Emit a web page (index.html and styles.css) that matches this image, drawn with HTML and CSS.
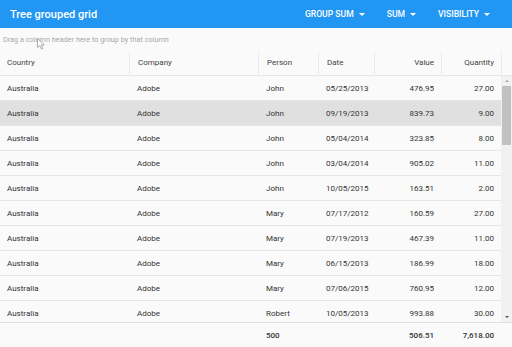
FILE: index.html
```html
<!DOCTYPE html>
<html>
<head>
<meta charset="utf-8">
<link rel="stylesheet" href="styles.css">
</head>
<body>
<div class="app">
  <header class="appbar">
    <div class="title">Tree grouped grid</div>
    <nav class="menus">
      <span class="menu">GROUP SUM <i class="caret"></i></span>
      <span class="menu">SUM <i class="caret"></i></span>
      <span class="menu">VISIBILITY <i class="caret"></i></span>
    </nav>
  </header>
  <div class="grid">
    <div class="group-panel">Drag a column header here to group by that column</div>
    <div class="row head">
      <div class="cell">Country</div>
      <div class="cell">Company</div>
      <div class="cell">Person</div>
      <div class="cell">Date</div>
      <div class="cell num">Value</div>
      <div class="cell num">Quantity</div>
      <div class="cell gap"></div>
    </div>
    <div class="body">
      <div class="rows">
        <div class="row"><div class="cell">Australia</div><div class="cell">Adobe</div><div class="cell">John</div><div class="cell">05/25/2013</div><div class="cell num">476.95</div><div class="cell num">27.00</div></div>
        <div class="row sel"><div class="cell">Australia</div><div class="cell">Adobe</div><div class="cell">John</div><div class="cell">09/19/2013</div><div class="cell num">839.73</div><div class="cell num">9.00</div></div>
        <div class="row"><div class="cell">Australia</div><div class="cell">Adobe</div><div class="cell">John</div><div class="cell">05/04/2014</div><div class="cell num">323.85</div><div class="cell num">8.00</div></div>
        <div class="row"><div class="cell">Australia</div><div class="cell">Adobe</div><div class="cell">John</div><div class="cell">03/04/2014</div><div class="cell num">905.02</div><div class="cell num">11.00</div></div>
        <div class="row"><div class="cell">Australia</div><div class="cell">Adobe</div><div class="cell">John</div><div class="cell">10/05/2015</div><div class="cell num">163.51</div><div class="cell num">2.00</div></div>
        <div class="row"><div class="cell">Australia</div><div class="cell">Adobe</div><div class="cell">Mary</div><div class="cell">07/17/2012</div><div class="cell num">160.59</div><div class="cell num">27.00</div></div>
        <div class="row"><div class="cell">Australia</div><div class="cell">Adobe</div><div class="cell">Mary</div><div class="cell">07/19/2013</div><div class="cell num">467.39</div><div class="cell num">11.00</div></div>
        <div class="row"><div class="cell">Australia</div><div class="cell">Adobe</div><div class="cell">Mary</div><div class="cell">06/15/2013</div><div class="cell num">186.99</div><div class="cell num">18.00</div></div>
        <div class="row"><div class="cell">Australia</div><div class="cell">Adobe</div><div class="cell">Mary</div><div class="cell">07/06/2015</div><div class="cell num">760.95</div><div class="cell num">12.00</div></div>
        <div class="row"><div class="cell">Australia</div><div class="cell">Adobe</div><div class="cell">Robert</div><div class="cell">10/05/2013</div><div class="cell num">993.88</div><div class="cell num">30.00</div></div>
      </div>
      <div class="scrollbar">
        <span class="arrow up"></span>
        <div class="track"><div class="thumb"></div></div>
        <span class="arrow down"></span>
      </div>
    </div>
    <div class="row foot">
      <div class="cell"></div>
      <div class="cell"></div>
      <div class="cell">500</div>
      <div class="cell"></div>
      <div class="cell num">506.51</div>
      <div class="cell num">7,618.00</div>
      <div class="cell gap"></div>
    </div>
    <svg class="cursor" width="8" height="12" viewBox="0 0 8 12"><path d="M0.5 0.5 L0.5 9.5 L2.8 7.4 L4.4 11 L5.8 10.4 L4.3 6.9 L7.3 6.9 Z" fill="#fff" stroke="#999" stroke-width="0.8"/></svg>
  </div>
</div>
</body>
</html>
```
FILE: styles.css
```css
* { box-sizing: border-box; }
html, body { margin: 0; padding: 0; }
body {
  width: 512px;
  height: 347px;
  overflow: hidden;
  font-family: Roboto, "Liberation Sans", sans-serif;
  background: #fafafa;
}
.app { display: flex; flex-direction: column; height: 347px; }
.appbar {
  height: 28px;
  background: #2196f3;
  color: #fff;
  display: flex;
  align-items: center;
  justify-content: space-between;
  padding: 0 0 0 10px;
}
.title { font-size: 11px; font-weight: 500; }
.menus { display: flex; align-items: center; padding-right: 22px; }
.menu {
  font-size: 8.6px;
  font-weight: 500;
  display: flex;
  align-items: center;
  margin-left: 22px;
}
.menu:first-child { margin-left: 0; }
.caret {
  display: inline-block;
  margin-left: 5px;
  width: 0; height: 0;
  border-left: 3px solid transparent;
  border-right: 3px solid transparent;
  border-top: 3px solid #fff;
}
.grid { position: relative; flex: 1; display: flex; flex-direction: column; background: #fafafa; }
.group-panel {
  height: 22px;
  display: flex;
  align-items: center;
  padding-left: 3px;
  font-size: 7.3px;
  color: #a8a8a8;
}
.row {
  display: grid;
  grid-template-columns: 129px 129px 60px 56px 67px 60px;
  height: 25px;
  border-bottom: 1px solid #e6e6e6;
  font-size: 8px;
  color: #333;
  background: #fafafa;
}
.row .cell {
  display: flex;
  align-items: center;
  padding: 0 8px 0 7px;
  white-space: nowrap;
}
.row .cell.num { justify-content: flex-end; padding-right: 7px; }
.row.head { grid-template-columns: 129px 129px 60px 56px 67px 60px 11px; height: 26px; color: #444; }
.row.head .cell + .cell { border-left: 1px dotted #dcdcdc; }
.row.head .cell { border-top: 2px solid #fafafa; border-bottom: 2px solid #fafafa; }
.row.head .cell.gap { border-left: 1px dotted #dcdcdc; }
.row.sel { background: #e0e0e0; }
.body { display: flex; height: 246px; overflow: hidden; }
.rows { width: 501px; }
.row .cell:nth-child(2), .row .cell:nth-child(3), .row .cell:nth-child(4) { padding-left: 8px; }
.scrollbar {
  width: 11px;
  background: #f1f1f1;
  display: flex;
  flex-direction: column;
  align-items: center;
}
.arrow { width: 0; height: 0; border-left: 2px solid transparent; border-right: 2px solid transparent; margin: 4px 0; }
.arrow.up { border-bottom: 2px solid #a3a3a3; }
.arrow.down { border-top: 2px solid #505050; }
.track { flex: 1; width: 100%; }
.thumb { width: 9px; margin: 0 auto; height: 59px; background: #c1c1c1; }
.row.foot {
  grid-template-columns: 129px 129px 60px 56px 67px 60px 11px;
  border-top: 1px solid #e0e0e0;
  border-bottom: none;
  height: 25px;
  color: #333;
  font-weight: 500;
}
.cursor { position: absolute; left: 37px; top: 10px; }
```
